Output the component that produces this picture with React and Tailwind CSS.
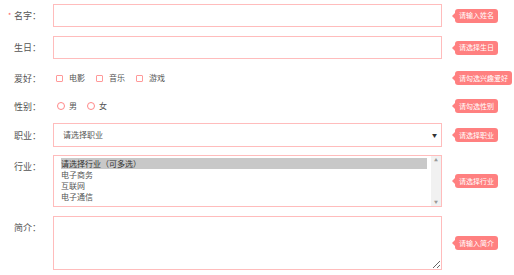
const font = { fontFamily: '"Noto Sans CJK SC", "Noto Sans", sans-serif' };

function Tip({ text }) {
  return (
    <div className="relative ml-[13px] flex h-[14px] items-center self-center rounded-[3px] bg-[#ff8080] px-[4px] text-[7px] leading-none text-white">
      <span className="absolute left-[-3px] top-1/2 h-0 w-0 -translate-y-1/2 border-y-[3px] border-r-[3px] border-y-transparent border-r-[#ff8080]" />
      {text}
    </div>
  );
}

function Label({ text, required, top }) {
  return (
    <div className={`relative w-[53px] shrink-0 pl-[14px] text-[9px] leading-none text-[#555] ${top ? "self-start pt-[7px]" : "self-center"}`}>
      {required && <span className="absolute left-[8px] top-[1px] text-[7px] leading-none text-[#ff5a5a]">*</span>}
      {text}
    </div>
  );
}

function Check({ text }) {
  return (
    <div className="flex items-center">
      <span className="h-[7px] w-[7px] rounded-[1px] border border-[#f99]" />
      <span className="ml-[6px] text-[8px] text-[#555]">{text}</span>
    </div>
  );
}

function Radio({ text }) {
  return (
    <div className="flex items-center">
      <span className="h-[8px] w-[8px] rounded-full border-[1.5px] border-[#f88]" />
      <span className="ml-[4px] text-[8px] text-[#555]">{text}</span>
    </div>
  );
}

export default function App() {
  return (
    <div className="h-[275px] w-[514px] overflow-hidden bg-white pt-[4px]" style={font}>
      <div className="flex h-[23px]">
        <Label text="名字：" required />
        <input className="h-[23px] w-[389px] border border-[#ffbcbc] outline-none" />
        <Tip text="请输入姓名" />
      </div>

      <div className="mt-[9px] flex h-[23px]">
        <Label text="生日：" />
        <input className="h-[23px] w-[389px] border border-[#ffbcbc] outline-none" />
        <Tip text="请选择生日" />
      </div>

      <div className="mt-[9px] flex h-[20px]">
        <Label text="爱好：" />
        <div className="flex w-[389px] items-center gap-[11px] pl-[3px]">
          <Check text="电影" />
          <Check text="音乐" />
          <Check text="游戏" />
        </div>
        <Tip text="请勾选兴趣爱好" />
      </div>

      <div className="mt-[8px] flex h-[20px]">
        <Label text="性别：" />
        <div className="flex w-[389px] items-center gap-[10px] pl-[4px]">
          <Radio text="男" />
          <Radio text="女" />
        </div>
        <Tip text="请勾选性别" />
      </div>

      <div className="mt-[7px] flex h-[24px]">
        <Label text="职业：" />
        <div className="flex h-[24px] w-[389px] items-center justify-between border border-[#ffbcbc] pl-[9px] pr-[4px]">
          <span className="text-[8px] text-[#555]">请选择职业</span>
          <span className="text-[5px] text-[#333]">▼</span>
        </div>
        <Tip text="请选择职业" />
      </div>

      <div className="mt-[8px] flex h-[52px]">
        <Label text="行业：" top />
        <div className="flex h-[52px] w-[389px] border border-[#ffbcbc]">
          <div className="flex flex-1 flex-col pl-[7px] pr-[4px] pt-[2px] text-[8px] leading-[11px] text-[#555]">
            <span className="bg-[#c8c8c8] text-[#333]">请选择行业（可多选）</span>
            <span>电子商务</span>
            <span>互联网</span>
            <span>电子通信</span>
          </div>
          <div className="flex w-[10px] flex-col items-center justify-between bg-[#f1f1f1] py-[2px] text-[4px] leading-none text-[#999]">
            <span>▲</span>
            <span>▼</span>
          </div>
        </div>
        <Tip text="请选择行业" />
      </div>

      <div className="mt-[9px] flex h-[54px]">
        <Label text="简介：" top />
        <textarea className="h-[54px] w-[389px] resize border border-[#ffbcbc] outline-none" />
        <Tip text="请输入简介" />
      </div>
    </div>
  );
}
